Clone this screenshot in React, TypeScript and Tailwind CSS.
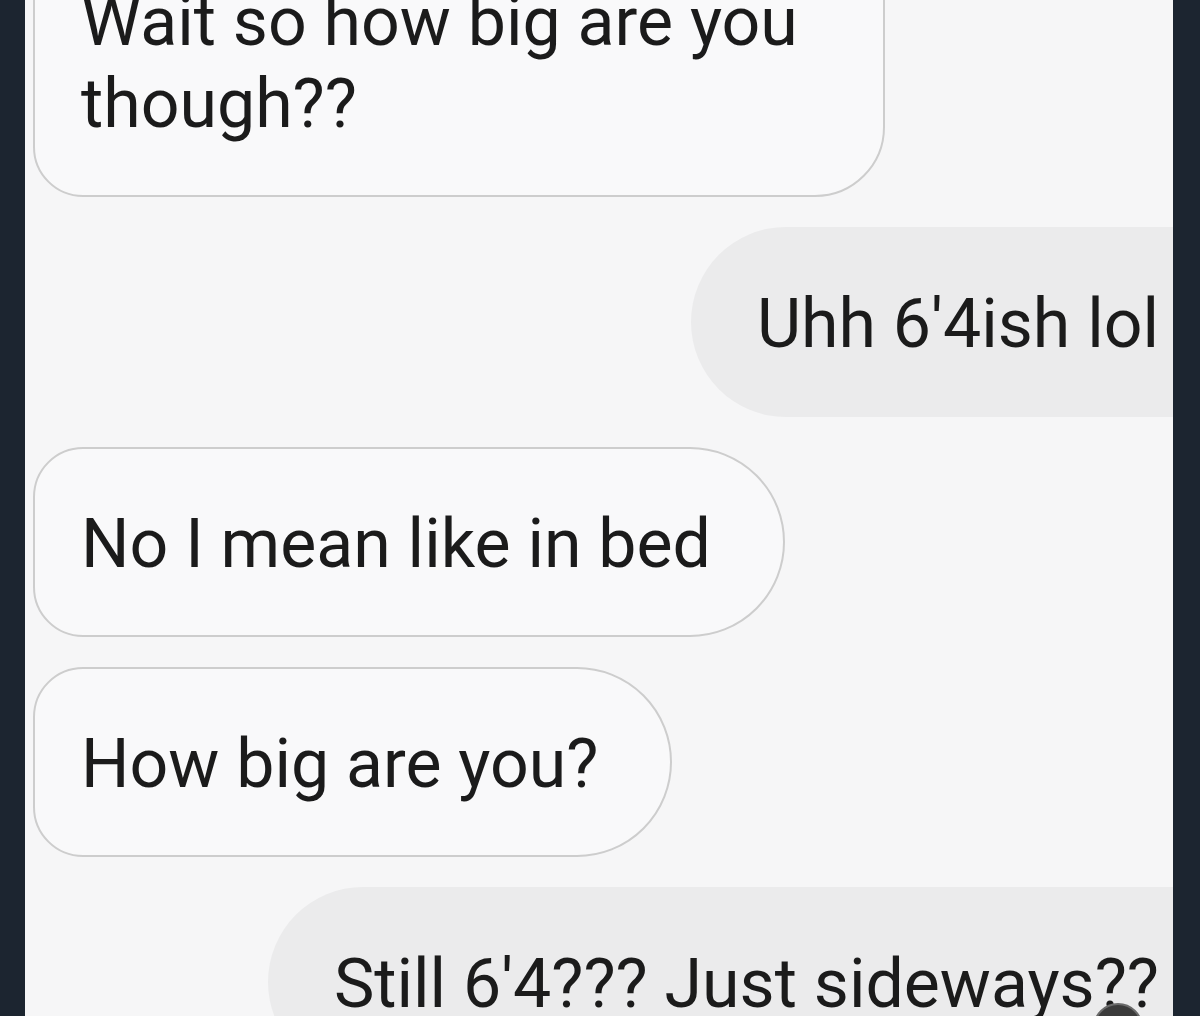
type Msg = {
  id: number;
  text: string;
  out: boolean;
};

const messages: Msg[] = [
  { id: 1, text: "Wait so how big are you though??", out: false },
  { id: 2, text: "Uhh 6'4ish lol", out: true },
  { id: 3, text: "No I mean like in bed", out: false },
  { id: 4, text: "How big are you?", out: false },
  { id: 5, text: "Still 6'4??? Just sideways??", out: true },
];

function Bubble({ msg, first }: { msg: Msg; first?: boolean }) {
  if (msg.out) {
    return (
      <div className="flex justify-end">
        <div className="relative rounded-l-[95px] bg-[#ebebec] pl-[66px] pr-[14px] pt-[56px] pb-[52px] whitespace-nowrap">
          {msg.text}
          {msg.id === 5 && (
            <span className="absolute left-[calc(100%-80px)] top-[116px] h-[50px] w-[50px] rounded-full border-2 border-[#6b6b6b] bg-[#3b3b3b]" />
          )}
        </div>
      </div>
    );
  }

  return (
    <div className="flex justify-start">
      <div
        className={
          first
            ? "ml-[8px] -mt-[75px] w-[852px] rounded-tl-[50px] rounded-bl-[50px] rounded-br-[70px] rounded-tr-[70px] border-2 border-[#cdcdcd] bg-[#f9f9fa] pl-[46px] pr-[60px] pt-[54px] pb-[50px]"
            : "ml-[8px] rounded-l-[50px] rounded-r-[95px] border-2 border-[#cdcdcd] bg-[#f9f9fa] pl-[46px] pr-[72px] pt-[54px] pb-[50px] whitespace-nowrap"
        }
      >
        {msg.text}
      </div>
    </div>
  );
}

export default function App() {
  return (
    <div className="flex h-[1016px] w-[1200px] overflow-hidden bg-[#1c2530]">
      <div className="w-[25px] shrink-0 bg-[#1c2530]" />
      <div className="flex flex-1 flex-col gap-[30px] overflow-hidden bg-[#f6f6f7] font-['Roboto','Liberation_Sans',sans-serif] text-[68px] leading-[82px] text-[#1b1b1b]">
        {messages.map((m, i) => (
          <Bubble key={m.id} msg={m} first={i === 0} />
        ))}
      </div>
      <div className="w-[27px] shrink-0 bg-[#1c2530]" />
    </div>
  );
}
